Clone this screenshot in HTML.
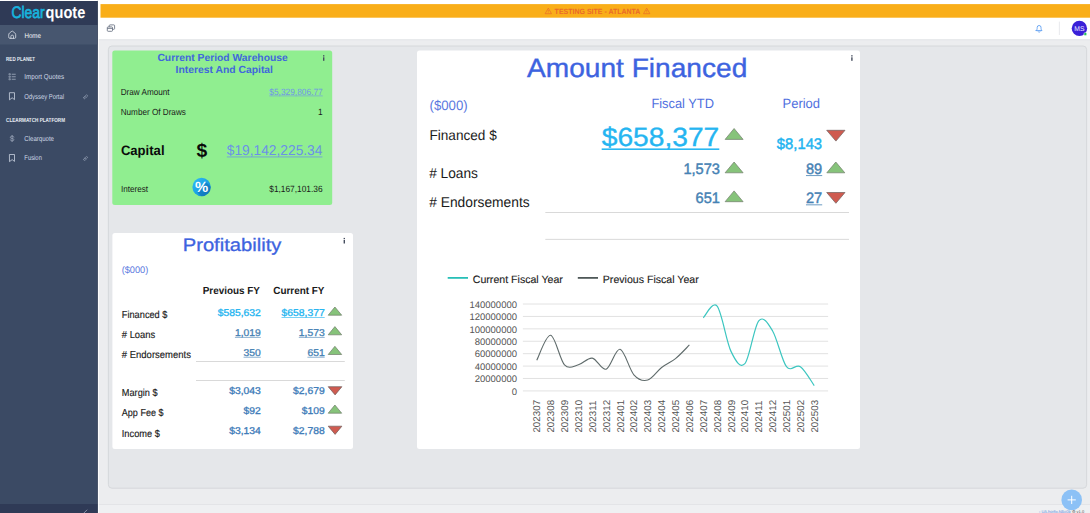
<!DOCTYPE html>
<html><head><meta charset="utf-8"><title>Clearquote</title>
<style>
html,body{margin:0;padding:0;}
body{width:1090px;height:513px;overflow:hidden;background:#ecedef;font-family:"Liberation Sans",sans-serif;position:relative;}
svg{position:absolute;left:0;top:0;display:block;}
</style></head><body>
<svg width="1090" height="513" viewBox="0 0 1090 513" font-family="Liberation Sans, sans-serif" text-rendering="geometricPrecision">
<defs>
<linearGradient id="pg" x1="0" y1="0" x2="1" y2="1"><stop offset="0" stop-color="#30bdf5"/><stop offset="0.55" stop-color="#1b9fe4"/><stop offset="1" stop-color="#127fc6"/></linearGradient>
</defs>
<rect x="0" y="0" width="1090" height="513" fill="#ecedef"/>
<!-- top bar -->
<rect x="97.5" y="0" width="992.5" height="39.4" fill="#ffffff"/>
<rect x="97.5" y="39.4" width="992.5" height="0.9" fill="#e1e3e6"/>
<rect x="100.5" y="4.1" width="989.5" height="13.6" fill="#f9ae19"/>
<!-- container -->
<rect x="108.4" y="46" width="978.2" height="442.2" rx="3.5" fill="#e5e7ea" stroke="#d4d6d9" stroke-width="0.9"/>
<!-- footer -->
<rect x="97.5" y="504.6" width="992.5" height="8.4" fill="#eff0f2"/>
<rect x="97.5" y="504" width="992.5" height="0.8" fill="#e0e2e5"/>
<!-- cards -->
<rect x="112.3" y="50.5" width="219.9" height="154.6" rx="2.5" fill="#90ee90"/>
<rect x="112.4" y="232.9" width="240.6" height="216.1" rx="2.5" fill="#ffffff"/>
<rect x="417" y="50.5" width="443" height="398.6" rx="2.5" fill="#ffffff"/>
<!-- rules -->
<g fill="#d0d0d0">
<rect x="196" y="361" width="148.8" height="0.8"/>
<rect x="196" y="380.1" width="148.8" height="0.8"/>
<rect x="545.3" y="212" width="303.7" height="0.8"/>
<rect x="545.3" y="238.9" width="303.7" height="0.8"/>
</g>
<!-- banner text -->
<text x="0" y="13.50" font-size="7.60" fill="#ea6a2a" transform="translate(554.60 0) scale(0.9220 1)" font-weight="bold" >TESTING SITE - ATLANTA</text><path d="M548.30 8.10 L551.50 13.70 L545.10 13.70 Z" fill="none" stroke="#ea6a2a" stroke-width="0.7" stroke-linejoin="round"/><path d="M548.30 10.00 v1.70 M548.30 12.30 v0.5" stroke="#ea6a2a" stroke-width="0.7" fill="none"/><path d="M646.70 8.10 L649.90 13.70 L643.50 13.70 Z" fill="none" stroke="#ea6a2a" stroke-width="0.7" stroke-linejoin="round"/><path d="M646.70 10.00 v1.70 M646.70 12.30 v0.5" stroke="#ea6a2a" stroke-width="0.7" fill="none"/>
<!-- percent circle -->
<clipPath id="pc"><circle cx="201.6" cy="187" r="9.2"/></clipPath>
<circle cx="201.6" cy="187" r="9.2" fill="url(#pg)"/>
<polygon points="197.5,192.5 206.5,182.5 216,192 207,202" fill="#0b63a8" opacity="0.45" clip-path="url(#pc)"/>
<text x="201.6" y="192.3" text-anchor="middle" font-size="14.8" font-weight="bold" fill="#ffffff">%</text>
<text x="0" y="61.40" font-size="10.30" fill="#4068dc" transform="translate(157.40 0) scale(1.0022 1)" font-weight="bold" >Current Period Warehouse</text>
<text x="0" y="73.20" font-size="10.30" fill="#4068dc" transform="translate(175.60 0) scale(1.0050 1)" font-weight="bold" >Interest And Capital</text>
<text x="120.70" y="94.80" font-size="8.88" fill="#1a1a1a" transform="translate(120.70 0) scale(0.9174 1) translate(-120.70 0)">Draw Amount</text>
<text x="322.70" y="94.80" font-size="9.10" fill="#6f96e6" text-anchor="end" transform="translate(322.70 0) scale(0.9174 1) translate(-322.70 0)">$5,329,806.77</text><rect x="269.30" y="95.63" width="53.40" height="0.60" fill="#6f96e6"/>
<text x="120.70" y="114.60" font-size="8.88" fill="#1a1a1a" transform="translate(120.70 0) scale(0.9174 1) translate(-120.70 0)">Number Of Draws</text>
<text x="322.70" y="114.60" font-size="9.10" fill="#1a1a1a" text-anchor="end" transform="translate(322.70 0) scale(0.9174 1) translate(-322.70 0)">1</text>
<text x="120.90" y="155.20" font-size="13.62" fill="#0a0a0a" font-weight="bold" transform="translate(120.90 0) scale(0.9615 1) translate(-120.90 0)">Capital</text>
<text x="196.50" y="157.10" font-size="19.30" fill="#0a0a0a" font-weight="bold">$</text>
<text x="322.40" y="155.20" font-size="14.30" fill="#6a90e8" text-anchor="end" transform="translate(322.40 0) scale(0.9615 1) translate(-322.40 0)">$19,142,225.34</text><rect x="226.82" y="156.57" width="95.58" height="0.76" fill="#6a90e8"/>
<text x="120.90" y="191.70" font-size="8.88" fill="#1a1a1a" transform="translate(120.90 0) scale(0.9174 1) translate(-120.90 0)">Interest</text>
<text x="322.60" y="191.70" font-size="9.10" fill="#1a1a1a" text-anchor="end" transform="translate(322.60 0) scale(0.9174 1) translate(-322.60 0)">$1,167,101.36</text>
<text x="232.10" y="251.40" font-size="18.08" fill="#3d63e0" text-anchor="middle" stroke="#3d63e0" stroke-width="0.30" transform="translate(232.10 0) scale(1.1173 1) translate(-232.10 0)">Profitability</text>
<text x="121.70" y="272.90" font-size="9.57" fill="#5a78e0" transform="translate(121.70 0) scale(0.9615 1) translate(-121.70 0)">($000)</text>
<text x="202.70" y="294.00" font-size="10.30" fill="#1a1a1a" font-weight="bold" transform="translate(202.70 0) scale(0.9615 1) translate(-202.70 0)">Previous FY</text>
<text x="273.30" y="294.00" font-size="10.30" fill="#1a1a1a" font-weight="bold" transform="translate(273.30 0) scale(0.9615 1) translate(-273.30 0)">Current FY</text>
<text x="0" y="317.80" font-size="10.20" fill="#1a1a1a" transform="translate(121.80 0) scale(0.9055 1)" stroke="#1a1a1a" stroke-width="0.15" >Financed $</text>
<text x="260.80" y="316.00" font-size="9.83" fill="#22b4f0" text-anchor="end" stroke="#22b4f0" stroke-width="0.30" transform="translate(260.80 0) scale(1.0526 1) translate(-260.80 0)">$585,632</text>
<text x="324.70" y="316.00" font-size="9.83" fill="#22b4f0" text-anchor="end" stroke="#22b4f0" stroke-width="0.30" transform="translate(324.70 0) scale(1.0526 1) translate(-324.70 0)">$658,377</text><rect x="281.53" y="317.04" width="43.17" height="0.60" fill="#22b4f0"/>
<text x="0" y="338.20" font-size="10.20" fill="#1a1a1a" transform="translate(121.80 0) scale(0.9229 1)" stroke="#1a1a1a" stroke-width="0.15" ># Loans</text>
<text x="260.80" y="335.90" font-size="9.83" fill="#4682b4" text-anchor="end" stroke="#4682b4" stroke-width="0.30" transform="translate(260.80 0) scale(1.0526 1) translate(-260.80 0)">1,019</text><rect x="234.90" y="336.94" width="25.90" height="0.60" fill="#4682b4"/>
<text x="324.70" y="335.90" font-size="9.83" fill="#4682b4" text-anchor="end" stroke="#4682b4" stroke-width="0.30" transform="translate(324.70 0) scale(1.0526 1) translate(-324.70 0)">1,573</text><rect x="298.80" y="336.94" width="25.90" height="0.60" fill="#4682b4"/>
<text x="0" y="358.20" font-size="10.20" fill="#1a1a1a" transform="translate(121.80 0) scale(0.9317 1)" stroke="#1a1a1a" stroke-width="0.15" ># Endorsements</text>
<text x="260.80" y="355.80" font-size="9.83" fill="#4682b4" text-anchor="end" stroke="#4682b4" stroke-width="0.30" transform="translate(260.80 0) scale(1.0526 1) translate(-260.80 0)">350</text><rect x="243.53" y="356.84" width="17.27" height="0.60" fill="#4682b4"/>
<text x="324.70" y="355.80" font-size="9.83" fill="#4682b4" text-anchor="end" stroke="#4682b4" stroke-width="0.30" transform="translate(324.70 0) scale(1.0526 1) translate(-324.70 0)">651</text><rect x="307.43" y="356.84" width="17.27" height="0.60" fill="#4682b4"/>
<text x="0" y="396.30" font-size="10.20" fill="#1a1a1a" transform="translate(121.80 0) scale(0.9021 1)" stroke="#1a1a1a" stroke-width="0.15" >Margin $</text>
<text x="260.80" y="394.10" font-size="9.83" fill="#3b7ab8" text-anchor="end" stroke="#3b7ab8" stroke-width="0.30" transform="translate(260.80 0) scale(1.0526 1) translate(-260.80 0)">$3,043</text>
<text x="324.70" y="394.10" font-size="9.83" fill="#3b7ab8" text-anchor="end" stroke="#3b7ab8" stroke-width="0.30" transform="translate(324.70 0) scale(1.0526 1) translate(-324.70 0)">$2,679</text>
<text x="0" y="416.10" font-size="10.20" fill="#1a1a1a" transform="translate(121.80 0) scale(0.8881 1)" stroke="#1a1a1a" stroke-width="0.15" >App Fee $</text>
<text x="260.80" y="413.90" font-size="9.83" fill="#3b7ab8" text-anchor="end" stroke="#3b7ab8" stroke-width="0.30" transform="translate(260.80 0) scale(1.0526 1) translate(-260.80 0)">$92</text>
<text x="324.70" y="413.90" font-size="9.83" fill="#3b7ab8" text-anchor="end" stroke="#3b7ab8" stroke-width="0.30" transform="translate(324.70 0) scale(1.0526 1) translate(-324.70 0)">$109</text>
<text x="0" y="436.70" font-size="10.20" fill="#1a1a1a" transform="translate(121.80 0) scale(0.9081 1)" stroke="#1a1a1a" stroke-width="0.15" >Income $</text>
<text x="260.80" y="434.40" font-size="9.83" fill="#3b7ab8" text-anchor="end" stroke="#3b7ab8" stroke-width="0.30" transform="translate(260.80 0) scale(1.0526 1) translate(-260.80 0)">$3,134</text>
<text x="324.70" y="434.40" font-size="9.83" fill="#3b7ab8" text-anchor="end" stroke="#3b7ab8" stroke-width="0.30" transform="translate(324.70 0) scale(1.0526 1) translate(-324.70 0)">$2,788</text>
<text x="637.20" y="76.90" font-size="26.70" fill="#3d63e0" text-anchor="middle" stroke="#3d63e0" stroke-width="0.40" transform="translate(637.20 0) scale(1.0526 1) translate(-637.20 0)">Amount Financed</text>
<text x="429.50" y="109.80" font-size="13.73" fill="#5a78e0" transform="translate(429.50 0) scale(0.9615 1) translate(-429.50 0)">($000)</text>
<text x="651.40" y="107.80" font-size="13.36" fill="#5070e0" transform="translate(651.40 0) scale(0.9615 1) translate(-651.40 0)">Fiscal YTD</text>
<text x="782.50" y="107.80" font-size="13.52" fill="#5070e0" transform="translate(782.50 0) scale(0.9615 1) translate(-782.50 0)">Period</text>
<text x="429.50" y="139.90" font-size="14.14" fill="#1a1a1a" transform="translate(429.50 0) scale(0.9615 1) translate(-429.50 0)">Financed $</text>
<text x="719.30" y="145.60" font-size="26.37" fill="#25b5f1" text-anchor="end" stroke="#25b5f1" stroke-width="0.35" transform="translate(719.30 0) scale(1.0695 1) translate(-719.30 0)">$658,377</text><rect x="601.68" y="148.42" width="117.62" height="1.55" fill="#25b5f1"/>
<text x="822.10" y="148.50" font-size="15.39" fill="#22b4f0" text-anchor="end" stroke="#22b4f0" stroke-width="0.45" transform="translate(822.10 0) scale(0.9615 1) translate(-822.10 0)">$8,143</text>
<text x="429.20" y="177.70" font-size="14.25" fill="#1a1a1a" transform="translate(429.20 0) scale(0.9615 1) translate(-429.20 0)"># Loans</text>
<text x="719.90" y="173.80" font-size="15.18" fill="#4682b4" text-anchor="end" stroke="#4682b4" stroke-width="0.45" transform="translate(719.90 0) scale(0.9615 1) translate(-719.90 0)">1,573</text>
<text x="822.20" y="173.80" font-size="15.18" fill="#4682b4" text-anchor="end" stroke="#4682b4" stroke-width="0.45" transform="translate(822.20 0) scale(0.9615 1) translate(-822.20 0)">89</text><rect x="805.96" y="175.26" width="16.24" height="0.80" fill="#4682b4"/>
<text x="429.20" y="207.10" font-size="14.35" fill="#1a1a1a" transform="translate(429.20 0) scale(0.9615 1) translate(-429.20 0)"># Endorsements</text>
<text x="719.90" y="203.00" font-size="15.18" fill="#4682b4" text-anchor="end" stroke="#4682b4" stroke-width="0.45" transform="translate(719.90 0) scale(0.9615 1) translate(-719.90 0)">651</text>
<text x="822.20" y="203.00" font-size="15.18" fill="#4682b4" text-anchor="end" stroke="#4682b4" stroke-width="0.45" transform="translate(822.20 0) scale(0.9615 1) translate(-822.20 0)">27</text><rect x="805.96" y="204.46" width="16.24" height="0.80" fill="#4682b4"/>
<line x1="522.9" x2="828.1" y1="390.90" y2="390.90" stroke="#dadada" stroke-width="0.8"/>
<text x="517" y="394.60" text-anchor="end" font-size="9.5" fill="#555">0</text>
<line x1="522.9" x2="828.1" y1="378.49" y2="378.49" stroke="#dadada" stroke-width="0.8"/>
<text x="517" y="382.19" text-anchor="end" font-size="9.5" fill="#555">20000000</text>
<line x1="522.9" x2="828.1" y1="366.08" y2="366.08" stroke="#dadada" stroke-width="0.8"/>
<text x="517" y="369.78" text-anchor="end" font-size="9.5" fill="#555">40000000</text>
<line x1="522.9" x2="828.1" y1="353.67" y2="353.67" stroke="#dadada" stroke-width="0.8"/>
<text x="517" y="357.37" text-anchor="end" font-size="9.5" fill="#555">60000000</text>
<line x1="522.9" x2="828.1" y1="341.26" y2="341.26" stroke="#dadada" stroke-width="0.8"/>
<text x="517" y="344.96" text-anchor="end" font-size="9.5" fill="#555">80000000</text>
<line x1="522.9" x2="828.1" y1="328.85" y2="328.85" stroke="#dadada" stroke-width="0.8"/>
<text x="517" y="332.55" text-anchor="end" font-size="9.5" fill="#555">100000000</text>
<line x1="522.9" x2="828.1" y1="316.44" y2="316.44" stroke="#dadada" stroke-width="0.8"/>
<text x="517" y="320.14" text-anchor="end" font-size="9.5" fill="#555">120000000</text>
<line x1="522.9" x2="828.1" y1="304.03" y2="304.03" stroke="#dadada" stroke-width="0.8"/>
<text x="517" y="307.73" text-anchor="end" font-size="9.5" fill="#555">140000000</text>
<text transform="translate(540.27,432.6) rotate(-90)" font-size="9.8" fill="#555">202307</text>
<text transform="translate(554.15,432.6) rotate(-90)" font-size="9.8" fill="#555">202308</text>
<text transform="translate(568.02,432.6) rotate(-90)" font-size="9.8" fill="#555">202309</text>
<text transform="translate(581.89,432.6) rotate(-90)" font-size="9.8" fill="#555">202310</text>
<text transform="translate(595.76,432.6) rotate(-90)" font-size="9.8" fill="#555">202311</text>
<text transform="translate(609.64,432.6) rotate(-90)" font-size="9.8" fill="#555">202312</text>
<text transform="translate(623.51,432.6) rotate(-90)" font-size="9.8" fill="#555">202401</text>
<text transform="translate(637.38,432.6) rotate(-90)" font-size="9.8" fill="#555">202402</text>
<text transform="translate(651.26,432.6) rotate(-90)" font-size="9.8" fill="#555">202403</text>
<text transform="translate(665.13,432.6) rotate(-90)" font-size="9.8" fill="#555">202404</text>
<text transform="translate(679.00,432.6) rotate(-90)" font-size="9.8" fill="#555">202405</text>
<text transform="translate(692.88,432.6) rotate(-90)" font-size="9.8" fill="#555">202406</text>
<text transform="translate(706.75,432.6) rotate(-90)" font-size="9.8" fill="#555">202407</text>
<text transform="translate(720.62,432.6) rotate(-90)" font-size="9.8" fill="#555">202408</text>
<text transform="translate(734.50,432.6) rotate(-90)" font-size="9.8" fill="#555">202409</text>
<text transform="translate(748.37,432.6) rotate(-90)" font-size="9.8" fill="#555">202410</text>
<text transform="translate(762.24,432.6) rotate(-90)" font-size="9.8" fill="#555">202411</text>
<text transform="translate(776.11,432.6) rotate(-90)" font-size="9.8" fill="#555">202412</text>
<text transform="translate(789.99,432.6) rotate(-90)" font-size="9.8" fill="#555">202501</text>
<text transform="translate(803.86,432.6) rotate(-90)" font-size="9.8" fill="#555">202502</text>
<text transform="translate(817.73,432.6) rotate(-90)" font-size="9.8" fill="#555">202503</text>
<path d="M536.77 360.19 C539.09 356.04 546.02 334.53 550.65 335.30 C555.27 336.08 559.89 359.92 564.52 364.84 C569.14 369.76 573.77 365.96 578.39 364.84 C583.02 363.72 587.64 357.41 592.26 358.14 C596.89 358.86 601.51 370.65 606.14 369.18 C610.76 367.71 615.39 348.40 620.01 349.33 C624.64 350.26 629.26 369.65 633.88 374.77 C638.51 379.89 643.13 381.25 647.76 380.04 C652.38 378.83 657.01 371.08 661.63 367.51 C666.25 363.94 670.88 362.39 675.50 358.63 C680.13 354.88 687.06 347.26 689.38 344.98" fill="none" stroke="#5f6b6b" stroke-width="1.1"/>
<path d="M703.25 317.81 C705.56 315.87 712.50 300.61 717.12 306.20 C721.75 311.80 726.37 341.79 731.00 351.37 C735.62 360.96 740.24 368.82 744.87 363.72 C749.49 358.62 754.12 326.24 758.74 320.78 C763.37 315.32 767.99 323.31 772.61 330.96 C777.24 338.61 781.86 360.74 786.49 366.70 C791.11 372.66 795.74 363.55 800.36 366.70 C804.98 369.85 811.92 382.47 814.23 385.63" fill="none" stroke="#3cc6c0" stroke-width="1.2"/>
<line x1="447.7" x2="468" y1="277.9" y2="277.9" stroke="#1dbcb4" stroke-width="1.7"/>
<text x="472.8" y="282.5" font-size="10.6" fill="#1c1c1c" stroke="#1c1c1c" stroke-width="0.12">Current Fiscal Year</text>
<line x1="577.8" x2="598" y1="277.9" y2="277.9" stroke="#465050" stroke-width="1.7"/>
<text x="602.8" y="282.5" font-size="10.6" fill="#1c1c1c" stroke="#1c1c1c" stroke-width="0.12">Previous Fiscal Year</text>
<polygon points="328.2,315.2 334.9,307.0 341.7,315.2" fill="#86c37a" stroke="#717c6c" stroke-width="0.7" stroke-linejoin="miter"/>
<polygon points="328.2,334.8 334.9,326.6 341.7,334.8" fill="#86c37a" stroke="#717c6c" stroke-width="0.7" stroke-linejoin="miter"/>
<polygon points="328.2,354.5 334.9,346.3 341.7,354.5" fill="#86c37a" stroke="#717c6c" stroke-width="0.7" stroke-linejoin="miter"/>
<polygon points="328.2,386.7 335.1,394.9 341.9,386.7" fill="#cf5b50" stroke="#6e5f5c" stroke-width="0.7"/>
<polygon points="328.2,413.2 334.9,405.0 341.7,413.2" fill="#86c37a" stroke="#717c6c" stroke-width="0.7" stroke-linejoin="miter"/>
<polygon points="328.2,426.2 335.1,434.4 341.9,426.2" fill="#cf5b50" stroke="#6e5f5c" stroke-width="0.7"/>
<polygon points="725.1,139.4 734.1,128.5 743.1,139.4" fill="#86c37a" stroke="#717c6c" stroke-width="0.7" stroke-linejoin="miter"/>
<polygon points="725.1,172.8 734.1,162.0 743.1,172.8" fill="#86c37a" stroke="#717c6c" stroke-width="0.7" stroke-linejoin="miter"/>
<polygon points="725.1,201.7 734.1,190.9 743.1,201.7" fill="#86c37a" stroke="#717c6c" stroke-width="0.7" stroke-linejoin="miter"/>
<polygon points="826.7,130.3 835.9,141.1 845.0,130.3" fill="#cf5b50" stroke="#6e5f5c" stroke-width="0.7"/>
<polygon points="826.8,172.8 835.8,162.0 844.8,172.8" fill="#86c37a" stroke="#717c6c" stroke-width="0.7" stroke-linejoin="miter"/>
<polygon points="826.7,192.5 835.9,203.3 845.0,192.5" fill="#cf5b50" stroke="#6e5f5c" stroke-width="0.7"/>
<!-- card menu dots -->
<g fill="#454d5e">
<rect x="323" y="55.2" width="1.4" height="1.3"/><rect x="323" y="57.3" width="1.4" height="3.5"/>
<rect x="343.6" y="237.9" width="1.4" height="1.3"/><rect x="343.6" y="240" width="1.4" height="3.5"/>
<rect x="851.2" y="55.2" width="1.4" height="1.3"/><rect x="851.2" y="57.3" width="1.4" height="3.5"/>
</g>
<!-- toolbar windows icon -->
<g fill="none" stroke="#5d6779" stroke-width="0.8">
<rect x="107.3" y="26.9" width="5.2" height="4.4" rx="0.8"/>
<path d="M109.2 26.9 v-1.2 a0.8 0.8 0 0 1 0.8 -0.8 h3.8 a0.8 0.8 0 0 1 0.8 0.8 v2.8 a0.8 0.8 0 0 1 -0.8 0.8 h-1.3"/>
<line x1="107.3" y1="28.4" x2="112.5" y2="28.4"/>
</g>
<!-- bell -->
<g fill="none" stroke="#5b9df2" stroke-width="0.9" stroke-linecap="round" stroke-linejoin="round">
<path d="M1036.2 30.6 h5.8 c-0.8 -0.7 -1 -1.6 -1 -3.2 a1.9 1.9 0 0 0 -3.8 0 c0 1.6 -0.2 2.5 -1 3.2 z"/>
<path d="M1038.3 31.8 a0.9 0.9 0 0 0 1.6 0"/>
</g>
<line x1="1059.4" x2="1059.4" y1="21.6" y2="35" stroke="#e3e5e8" stroke-width="0.8"/>
<circle cx="1079.4" cy="28.4" r="7.7" fill="#3a20d8"/>
<text x="1079.4" y="30.9" text-anchor="middle" font-size="6.8" fill="#e8e8ff">MS</text>
<circle cx="1085.3" cy="34" r="1.5" fill="#22c05a" stroke="#fff" stroke-width="0.4"/>
<!-- FAB -->
<circle cx="1071.7" cy="499.9" r="10.3" fill="#8cc1f6"/>
<path d="M1067.6 499.9 h8.2 M1071.7 495.8 v8.2" stroke="#fff" stroke-width="1" fill="none"/>
<text x="1039" y="512.6" font-size="4" fill="#5b8de0">&#8249; UA.hotfix.fd5c0b <tspan fill="#555">&#9881; v1.0</tspan></text>
<!-- sidebar -->
<rect x="0" y="0" width="97.9" height="513" fill="#3b4a64"/>
<rect x="0" y="0" width="97.9" height="1" fill="#ffffff"/>
<rect x="0" y="1" width="97.9" height="24" fill="#2f3a56"/>
<rect x="0" y="25" width="97.9" height="19.5" fill="#47566f"/>
<rect x="0" y="504" width="97.9" height="9" fill="#2f3a56"/>
<rect x="97" y="1" width="0.9" height="512" fill="#27304a" opacity="0.6"/>
<rect x="97.9" y="0" width="0.9" height="513" fill="#ffffff"/>
<text x="0" y="37.60" font-size="6.90" fill="#f4f6fa" transform="translate(24.40 0) scale(0.9019 1)" >Home</text>
<text x="0" y="60.60" font-size="5.90" fill="#e6ebf3" transform="translate(6.10 0) scale(0.7693 1)" font-weight="bold" >RED PLANET</text>
<text x="0" y="79.20" font-size="7.10" fill="#cfd8e6" transform="translate(24.30 0) scale(0.8847 1)" >Import Quotes</text>
<text x="0" y="98.60" font-size="7.10" fill="#cfd8e6" transform="translate(24.30 0) scale(0.8267 1)" >Odyssey Portal</text>
<text x="0" y="121.90" font-size="5.90" fill="#e6ebf3" transform="translate(6.10 0) scale(0.7850 1)" font-weight="bold" >CLEARMATCH PLATFORM</text>
<text x="0" y="141.00" font-size="7.10" fill="#cfd8e6" transform="translate(24.30 0) scale(0.8550 1)" >Clearquote</text>
<text x="0" y="160.30" font-size="7.10" fill="#cfd8e6" transform="translate(24.30 0) scale(0.8259 1)" >Fusion</text>
<text x="0" y="17.80" font-size="16.70" fill="#17b4de" transform="translate(11.50 0) scale(0.8294 1)" stroke="#17b4de" stroke-width="0.70" >Clear</text>
<text x="0" y="17.80" font-size="16.70" fill="#ffffff" transform="translate(45.60 0) scale(0.8734 1)" font-weight="bold" >quote</text>
<g fill="none" stroke="#d3dbe8" stroke-width="0.8" stroke-linecap="round" stroke-linejoin="round">
<!-- home -->
<path d="M8.7 34.7 Q8.7 33.7 9.5 33 L11.9 31.2 Q12.2 31 12.5 31.2 L14.9 33 Q15.7 33.7 15.7 34.7 V37.2 Q15.7 38.4 14.5 38.4 H9.9 Q8.7 38.4 8.7 37.2 Z" stroke="#d2d8e2" stroke-width="0.85"/>
<path d="M10.9 38.3 V36.4 a1.3 1.3 0 0 1 2.6 0 V38.3" stroke="#d2d8e2" stroke-width="0.85"/>
<!-- list -->
<g stroke="#b4bed0" stroke-width="0.55"><rect x="9.3" y="73.7" width="1.1" height="1.1"/><rect x="9.3" y="76.2" width="1.1" height="1.1"/><rect x="9.3" y="78.7" width="1.1" height="1.1"/>
<path d="M12.1 74.25 h3.2 M12.1 76.75 h3.2 M12.1 79.25 h3.2" stroke-width="0.7"/></g>
<!-- bookmark 1 -->
<path d="M9.8 92.7 h4.7 v6.9 l-2.35 -1.8 l-2.35 1.8 z" stroke-width="0.75"/>
<!-- link 1 -->
<g stroke-width="0.55" stroke="#a3aec3"><path d="M83.9 97.3 l2.2 -2.2 a0.85 0.85 0 0 1 1.2 1.2 l-2.2 2.2 a0.85 0.85 0 0 1 -1.2 -1.2 z"/><path d="M84.9 96.3 l0.9 0.9"/></g>
<!-- dollar -->
<g stroke="#aeb8cb" stroke-width="0.65"><path d="M12.1 135.4 v6.1"/><path d="M13.9 137.2 c0 -0.7 -0.8 -1 -1.8 -1 s-1.8 0.4 -1.8 1.15 c0 0.8 0.8 1 1.8 1.15 s1.8 0.45 1.8 1.2 c0 0.75 -0.8 1.15 -1.8 1.15 s-1.8 -0.35 -1.8 -1.05"/></g>
<!-- bookmark 2 -->
<path d="M9.8 154.5 h4.7 v6.9 l-2.35 -1.8 l-2.35 1.8 z" stroke-width="0.75"/>
<g stroke-width="0.55" stroke="#a3aec3"><path d="M83.9 159 l2.2 -2.2 a0.85 0.85 0 0 1 1.2 1.2 l-2.2 2.2 a0.85 0.85 0 0 1 -1.2 -1.2 z"/><path d="M84.9 158 l0.9 0.9"/></g>
<!-- collapse arrow -->
<path d="M86.9 510 l-3.2 3.2" stroke="#aeb8cc" stroke-width="0.7"/>
</g>
</svg>
</body></html>
